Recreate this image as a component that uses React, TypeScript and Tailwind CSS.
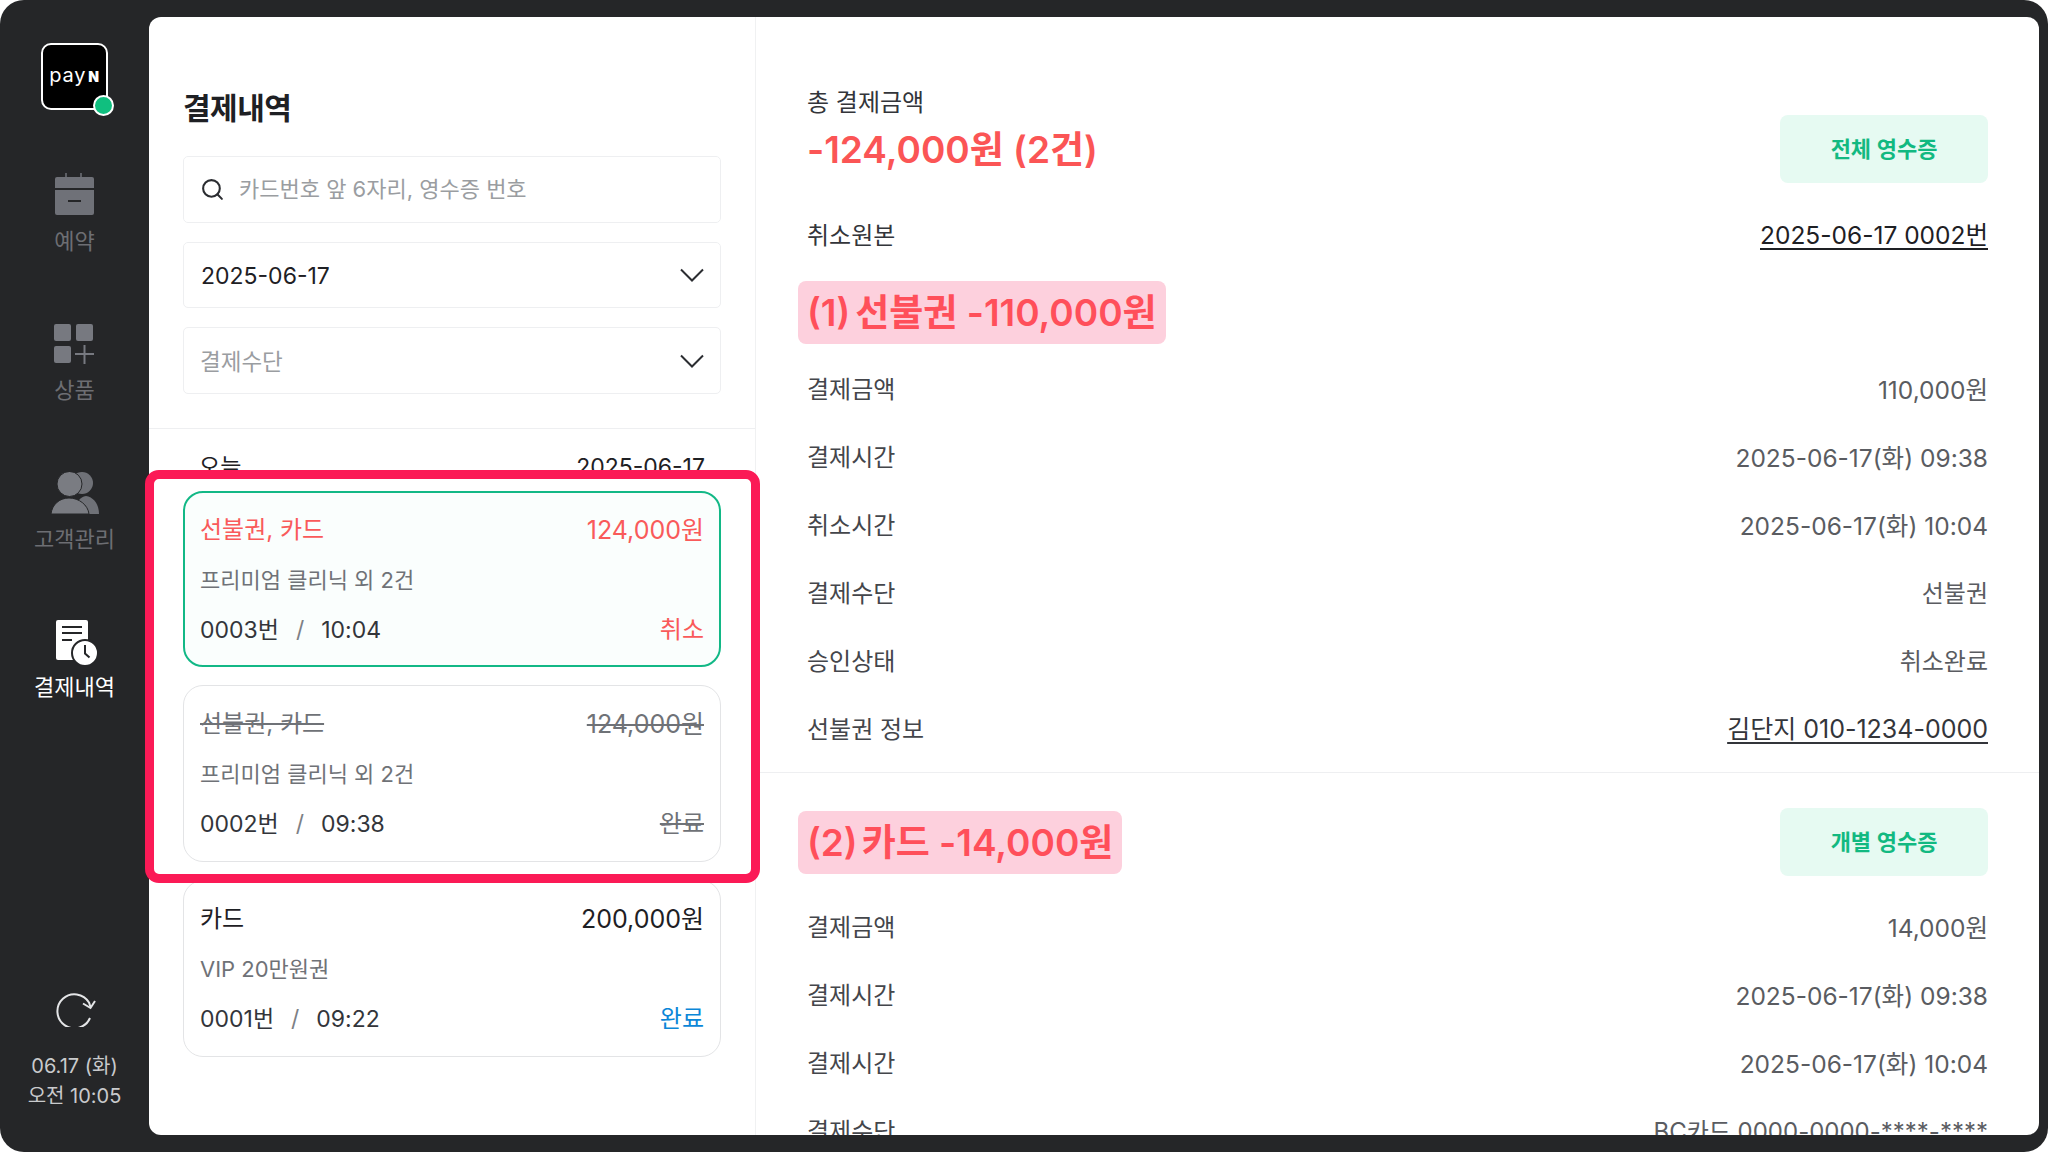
import { Search } from "lucide-react";

const details1 = [
  { label: "결제금액", value: "110,000원" },
  { label: "결제시간", value: "2025-06-17(화) 09:38" },
  { label: "취소시간", value: "2025-06-17(화) 10:04" },
  { label: "결제수단", value: "선불권", small: true },
  { label: "승인상태", value: "취소완료", small: true },
  { label: "선불권 정보", value: "김단지 010-1234-0000", link: true },
];

const details2 = [
  { label: "결제금액", value: "14,000원" },
  { label: "결제시간", value: "2025-06-17(화) 09:38" },
  { label: "결제시간", value: "2025-06-17(화) 10:04" },
  { label: "결제수단", value: "BC카드 0000-0000-****-****", small: true },
];

function Chevron() {
  return (
    <svg width="24" height="14" viewBox="0 0 24 14" fill="none" stroke="#2b2d31" strokeWidth="2">
      <path d="M1 1.5 12 12.5 23 1.5" />
    </svg>
  );
}

function CalendarIcon() {
  return (
    <svg width="39" height="42" viewBox="0 0 39 42">
      <path d="M11 0v6M26 0v6" stroke="#6f7178" strokeWidth="1.5" />
      <path d="M2 4h35a2 2 0 0 1 2 2v9H0V6a2 2 0 0 1 2-2Z" fill="#6f7178" />
      <path d="M0 17h39v23a2 2 0 0 1-2 2H2a2 2 0 0 1-2-2Z" fill="#6f7178" />
      <rect x="13" y="27" width="13" height="2" fill="#252628" />
    </svg>
  );
}

function GridIcon() {
  return (
    <svg width="40" height="40" viewBox="0 0 40 40" fill="#777980">
      <rect x="0" y="0" width="17" height="17" rx="2" />
      <rect x="22" y="0" width="17" height="17" rx="2" />
      <rect x="0" y="22" width="17" height="17" rx="2" />
      <path d="M21 30h19M30.500 21v19" stroke="#777980" strokeWidth="2" fill="none" />
    </svg>
  );
}

function PeopleIcon() {
  return (
    <svg width="48" height="42" viewBox="0 0 48 42">
      <circle cx="31" cy="11" r="11" fill="#6f7177" />
      <path d="M24 42c0-10 4-17 11-18 8 1 13 9 13 18Z" fill="#6f7177" />
      <circle cx="18.500" cy="12" r="12.500" fill="#7a7c82" stroke="#252628" strokeWidth="1" />
      <path d="M0 42c1-9 8-16 18-16s19 7 20 16Z" fill="#7a7c82" stroke="#252628" strokeWidth="1" />
    </svg>
  );
}

function ReceiptIcon() {
  return (
    <svg width="42" height="46" viewBox="0 0 42 46" className="translate-x-[2px]">
      <path d="M2 0h28a2 2 0 0 1 2 2v36a2 2 0 0 1-2 2H2a2 2 0 0 1-2-2V2a2 2 0 0 1 2-2Z" fill="#fff" />
      <path d="M6 7h20M6 13h20M6 20h10" stroke="#252628" strokeWidth="2" />
      <circle cx="29" cy="33" r="13" fill="#fff" stroke="#252628" strokeWidth="2" />
      <path d="M29 25v8.500l4.500 4" stroke="#252628" strokeWidth="2" fill="none" />
    </svg>
  );
}

function RefreshIcon() {
  return (
    <svg width="42" height="36" viewBox="0 0 42 36" fill="none" stroke="#e4e5e7" strokeWidth="2" className="translate-x-[1px]">
      <path d="M35 27A17 17 0 1 1 34 11.500L35.500 16" />
      <path d="M28 12.500 35.500 17 40 10" />
    </svg>
  );
}

function NavItem({ icon, label, active, labelClass }: { icon: React.ReactNode; label: string; active?: boolean; labelClass?: string }) {
  return (
    <div className="flex h-[149.500px] flex-col items-center gap-[9px]">
      <div className="flex h-[46px] items-center justify-center">{icon}</div>
      <span className={(active ? "text-[22px] leading-[28px] text-white " : "text-[22px] leading-[28px] text-[#6d6e73] ") + (labelClass ?? "")}>
        {label}
      </span>
    </div>
  );
}

function Sidebar() {
  return (
    <aside className="flex w-[149px] shrink-0 flex-col items-center pb-[24px] pt-[43px]">
      <div className="relative mb-[61px] flex h-[67px] w-[67px] items-center justify-center rounded-[10px] border-2 border-white bg-black">
        <span className="-translate-y-[2px] text-[20px] font-normal leading-none tracking-[0.8px] text-white">
          pay<span className="ml-[2px] text-[14px] font-black">N</span>
        </span>
        <span className="absolute right-[-8px] bottom-[-8px] h-[21px] w-[21px] rounded-full border-2 border-white bg-[#10bf7f]" />
      </div>
      <NavItem icon={<CalendarIcon />} label="예약" labelClass="translate-y-[1px]" />
      <NavItem icon={<GridIcon />} label="상품" />
      <NavItem icon={<PeopleIcon />} label="고객관리" />
      <NavItem icon={<ReceiptIcon />} label="결제내역" active labelClass="-translate-y-[2px]" />
      <div className="mt-auto flex flex-col items-center text-[20px] leading-[30px] text-[#c9cacc]">
        <div className="mb-[24px]">
          <RefreshIcon />
        </div>
        <span>06.17 (화)</span>
        <span>오전 10:05</span>
      </div>
    </aside>
  );
}

function Card({
  title,
  amount,
  desc,
  no,
  time,
  status,
  variant,
}: {
  title: string;
  amount: string;
  desc: string;
  no: string;
  time: string;
  status: string;
  variant: "cancel" | "strike" | "normal";
}) {
  const topColor =
    variant === "cancel" ? "text-[#f95a5a]" : variant === "strike" ? "text-[#6f7277] line-through" : "text-[#1e2024]";
  const statusColor =
    variant === "cancel" ? "text-[#f95a5a]" : variant === "strike" ? "text-[#6f7277] line-through" : "text-[#0b87d8]";
  return (
    <div
      className={
        variant === "cancel"
          ? "flex h-[176px] flex-col gap-[18px] rounded-[20px] border-2 border-[#12b886] bg-[#fafefd] px-[15px] pb-[19px] pt-[21px]"
          : "flex h-[177px] flex-col gap-[18px] rounded-[20px] border border-[#e3e4e6] bg-white px-[16px] pb-[20px] pt-[22px]"
      }
    >
      <div className={"flex items-center justify-between leading-[32px] " + topColor}>
        <span className="text-[24px]">{title}</span>
        <span className="text-[25px]">{amount}</span>
      </div>
      <div className="text-[22px] leading-[32px] text-[#6f7277]">{desc}</div>
      <div className="flex items-center justify-between leading-[32px]">
        <span className="text-[23px] text-[#33353a]">
          {no}
          <span className="mx-[17px] text-[#7d8085]">/</span>
          {time}
        </span>
        <span className={"text-[24px] " + statusColor}>{status}</span>
      </div>
    </div>
  );
}

function ListPanel() {
  return (
    <section className="w-[607px] shrink-0 border-r border-[#f0f1f2] pt-[71px]">
      <div className="px-[34px]">
        <h1 className="mb-[28px] text-[30px] font-bold leading-[40px] tracking-[-0.5px] text-[#1e2024]">결제내역</h1>
        <div className="flex flex-col gap-[19px]">
          <div className="flex h-[67px] items-center gap-[14px] rounded-[5px] border border-[#eeeff1] px-[16px]">
            <Search size={25} strokeWidth={2} className="text-[#2b2d31]" />
            <span className="text-[22px] text-[#9a9da1]">카드번호 앞 6자리, 영수증 번호</span>
          </div>
          <div className="flex h-[66px] items-center justify-between rounded-[5px] border border-[#eeeff1] pl-[17px] pr-[16px]">
            <span className="pt-[2px] text-[23px] text-[#1e2024]">2025-06-17</span>
            <Chevron />
          </div>
          <div className="flex h-[67px] items-center justify-between rounded-[5px] border border-[#eeeff1] pl-[16px] pr-[16px]">
            <span className="pt-[2px] text-[22.500px] text-[#9a9da1]">결제수단</span>
            <Chevron />
          </div>
        </div>
      </div>
      <div className="mt-[34px] border-t border-[#eeeff1] px-[34px] pt-[22px]">
        <div className="mb-[8px] flex justify-between px-[16px] text-[23px] leading-[32px] text-[#1e2024]">
          <span>오늘</span>
          <span>2025-06-17</span>
        </div>
        <div className="flex flex-col gap-[18px]">
          <Card variant="cancel" title="선불권, 카드" amount="124,000원" desc="프리미엄 클리닉 외 2건" no="0003번" time="10:04" status="취소" />
          <Card variant="strike" title="선불권, 카드" amount="124,000원" desc="프리미엄 클리닉 외 2건" no="0002번" time="09:38" status="완료" />
          <Card variant="normal" title="카드" amount="200,000원" desc="VIP 20만원권" no="0001번" time="09:22" status="완료" />
        </div>
      </div>
    </section>
  );
}

function ReceiptButton({ label }: { label: string }) {
  return (
    <div className="flex h-[68px] w-[208px] items-center justify-center rounded-[8px] bg-[#e6faf2] text-[22px] font-semibold text-[#12b981]">
      {label}
    </div>
  );
}

function Tag({ n, label, gap }: { n: string; label: string; gap: string }) {
  return (
    <div className={"ml-[-9px] flex h-[63px] items-center rounded-[8px] bg-[#fdd0dd] px-[9px] pt-[1px] text-[37px] font-semibold text-[#ff4f5a] " + gap}>
      <span>{n}</span>
      <span>{label}</span>
    </div>
  );
}

function DetailRow({ label, value, link, small }: { label: string; value: string; link?: boolean; small?: boolean }) {
  const valueClass = link
    ? "text-[25px] text-[#33353a] underline underline-offset-4"
    : small
      ? "text-[24px] text-[#5a5c61]"
      : "text-[24.500px] text-[#5a5c61]";
  return (
    <div className="flex h-[68px] shrink-0 items-center justify-between pt-[2px]">
      <span className="text-[24px] text-[#44464b]">{label}</span>
      <span className={valueClass}>{value}</span>
    </div>
  );
}

function DetailPanel() {
  return (
    <section className="flex min-w-0 flex-1 flex-col pt-[71px]">
      <div className="px-[51px]">
        <div className="flex items-start justify-between">
          <div>
            <div className="h-[28px] pt-[1px] text-[24px] leading-[28px] text-[#33353a]">총 결제금액</div>
            <div className="mt-[9px] text-[37px] font-semibold leading-[50px] text-[#fb5555]">-124,000원 (2건)</div>
          </div>
          <div className="mt-[27px]">
            <ReceiptButton label="전체 영수증" />
          </div>
        </div>
        <div className="mt-[36px] flex items-center justify-between pt-[1px] text-[24.500px] leading-[31px]">
          <span className="text-[24px] text-[#33353a]">취소원본</span>
          <span className="text-[#1e2024] underline underline-offset-4">2025-06-17 0002번</span>
        </div>
        <div className="mt-[30px] flex">
          <Tag n="(1)" label="선불권 -110,000원" gap="gap-[5px]" />
        </div>
        <div className="mt-[11px]">
          {details1.map((row) => (
            <DetailRow key={row.label} {...row} />
          ))}
        </div>
      </div>
      <div className="mt-[9px] border-t border-[#eeeff1] px-[51px] pt-[35px]">
        <div className="flex items-center justify-between">
          <Tag n="(2)" label="카드 -14,000원" gap="gap-[4px]" />
          <ReceiptButton label="개별 영수증" />
        </div>
        <div className="mt-[17px]">
          {details2.map((row, i) => (
            <DetailRow key={i} {...row} />
          ))}
        </div>
      </div>
    </section>
  );
}

export default function App() {
  return (
    <div className="h-[1152px] w-[2048px] overflow-hidden bg-white font-['Inter','Noto_Sans_CJK_KR',sans-serif]">
      <div className="flex h-full rounded-[24px] bg-[#252628] pb-[17px] pr-[9px]">
        <Sidebar />
        <div className="relative mt-[17px] min-w-0 flex-1">
          <main className="flex h-full overflow-hidden rounded-[12px] bg-white">
            <ListPanel />
            <DetailPanel />
          </main>
          {/* callout ring over the two cards, runs past the panel edge */}
          <div className="pointer-events-none absolute left-[-4px] top-[453px] h-[413px] w-[615px] rounded-[14px] border-[9px] border-[#fb1a56]" />
        </div>
      </div>
    </div>
  );
}
